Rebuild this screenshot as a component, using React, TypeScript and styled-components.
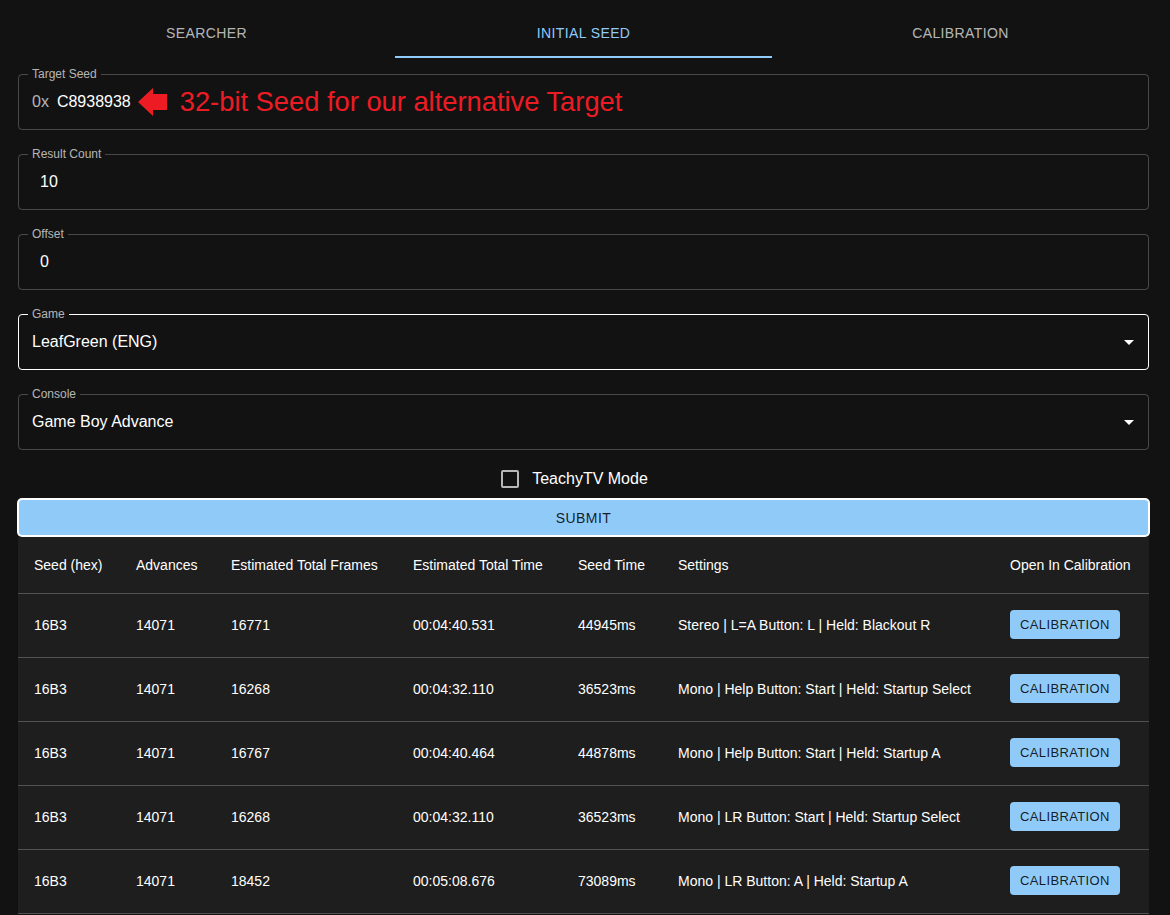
import React from 'react';
import styled, { createGlobalStyle } from 'styled-components';

const GlobalStyle = createGlobalStyle`
  html, body {
    margin: 0;
    padding: 0;
    background: #121212;
  }
  body {
    font-family: 'Liberation Sans', Arial, sans-serif;
    color: #fff;
  }
  * {
    box-sizing: border-box;
  }
`;

const Page = styled.div`
  width: 1131px;
  margin-left: 18px;
  padding-top: 10px;
  display: flex;
  flex-direction: column;
`;

const TabBar = styled.div`
  display: grid;
  grid-template-columns: repeat(3, 1fr);
`;

const Tab = styled.button<{ $active?: boolean }>`
  height: 48px;
  background: none;
  border: none;
  border-bottom: 2px solid ${p => (p.$active ? '#90caf9' : 'transparent')};
  color: ${p => (p.$active ? '#90caf9' : 'rgba(255, 255, 255, 0.7)')};
  font-family: 'Liberation Sans', Arial, sans-serif;
  font-size: 14px;
  letter-spacing: 0.02857em;
  text-transform: uppercase;
  padding: 0 0 1px;
`;

const Field = styled.div<{ $focused?: boolean }>`
  position: relative;
  margin: 16px 0 8px;
  height: 56px;
  border: 1px solid ${p => (p.$focused ? '#fff' : 'rgba(255, 255, 255, 0.23)')};
  border-radius: 4px;
  display: flex;
  align-items: center;
  padding: 0 13px;
`;

const FieldLabel = styled.span`
  position: absolute;
  top: -8px;
  left: 9px;
  padding: 0 4px;
  background: #121212;
  color: rgba(255, 255, 255, 0.7);
  font-size: 12px;
  line-height: 14px;
`;

const Value = styled.span<{ $inset?: boolean }>`
  font-size: 16px;
  color: #fff;
  padding-left: ${p => (p.$inset ? '8px' : '0')};
`;

const Prefix = styled.span`
  font-size: 16px;
  color: rgba(255, 255, 255, 0.7);
  margin-right: 8px;
`;

const Arrow = styled.svg`
  width: 30px;
  height: 28px;
  margin: 0 12px 0 7px;
`;

const Note = styled.span`
  color: #ed1c24;
  font-size: 27.3px;
  line-height: 30px;
`;

const DropIcon = styled.svg`
  position: absolute;
  right: 7px;
  top: 15px;
  width: 24px;
  height: 24px;
  fill: #fff;
`;

const CheckRow = styled.label`
  height: 41px;
  display: flex;
  align-items: center;
  justify-content: center;
  padding-right: 18px;
  font-size: 16px;
  color: #fff;
`;

const CheckBox = styled.span`
  width: 18px;
  height: 18px;
  border: 2px solid rgba(255, 255, 255, 0.7);
  border-radius: 2px;
  margin: 0 13px 0 0;
`;

const SubmitButton = styled.button`
  display: block;
  width: 100%;
  height: 37px;
  background: #90caf9;
  border: 1px solid #fff;
  box-shadow: 0 0 0 1px #fff;
  border-radius: 4px;
  color: rgba(0, 0, 0, 0.87);
  font-family: 'Liberation Sans', Arial, sans-serif;
  font-size: 14px;
  letter-spacing: 0.02857em;
  text-transform: uppercase;
`;

const Table = styled.table`
  width: 100%;
  table-layout: fixed;
  border-collapse: collapse;
  background: #1e1e1e;
  margin-top: 1px;
`;

const HeadCell = styled.th`
  height: 56px;
  padding: 0 16px;
  text-align: left;
  font-weight: normal;
  font-size: 14px;
  color: #fff;
  border-bottom: 1px solid #515151;
  white-space: nowrap;
`;

const Cell = styled.td`
  height: 64px;
  padding: 0 16px;
  font-size: 14px;
  color: #fff;
  border-bottom: 1px solid #515151;
  white-space: nowrap;
`;

const SmallButton = styled.button`
  background: #90caf9;
  border: none;
  border-radius: 4px;
  color: rgba(0, 0, 0, 0.87);
  font-family: 'Liberation Sans', Arial, sans-serif;
  font-size: 13px;
  letter-spacing: 0.02857em;
  text-transform: uppercase;
  padding: 0 10px;
  height: 29px;
  margin-bottom: 2px;
`;

const columns = [
  { label: 'Seed (hex)', width: 102 },
  { label: 'Advances', width: 95 },
  { label: 'Estimated Total Frames', width: 182 },
  { label: 'Estimated Total Time', width: 165 },
  { label: 'Seed Time', width: 100 },
  { label: 'Settings', width: 332 },
  { label: 'Open In Calibration', width: 155 },
];

const results = [
  { seed: '16B3', advances: '14071', frames: '16771', time: '00:04:40.531', seedTime: '44945ms', settings: 'Stereo | L=A Button: L | Held: Blackout R' },
  { seed: '16B3', advances: '14071', frames: '16268', time: '00:04:32.110', seedTime: '36523ms', settings: 'Mono | Help Button: Start | Held: Startup Select' },
  { seed: '16B3', advances: '14071', frames: '16767', time: '00:04:40.464', seedTime: '44878ms', settings: 'Mono | Help Button: Start | Held: Startup A' },
  { seed: '16B3', advances: '14071', frames: '16268', time: '00:04:32.110', seedTime: '36523ms', settings: 'Mono | LR Button: Start | Held: Startup Select' },
  { seed: '16B3', advances: '14071', frames: '18452', time: '00:05:08.676', seedTime: '73089ms', settings: 'Mono | LR Button: A | Held: Startup A' },
];

const ArrowDrop = () => (
  <DropIcon viewBox="0 0 24 24">
    <path d="M7 10l5 5 5-5z" />
  </DropIcon>
);

const App: React.FC = () => {
  return (
    <Page>
      <GlobalStyle />
      <TabBar>
        <Tab>Searcher</Tab>
        <Tab $active>Initial Seed</Tab>
        <Tab>Calibration</Tab>
      </TabBar>

      <Field>
        <FieldLabel>Target Seed</FieldLabel>
        <Prefix>0x</Prefix>
        <Value>C8938938</Value>
        <Arrow viewBox="0 0 30 28">
          <path d="M0 14 L15 0 L15 6 L29 6 L29 22 L15 22 L15 28 Z" fill="#ed1c24" />
        </Arrow>
        <Note>32-bit Seed for our alternative Target</Note>
      </Field>

      <Field>
        <FieldLabel>Result Count</FieldLabel>
        <Value $inset>10</Value>
      </Field>

      <Field>
        <FieldLabel>Offset</FieldLabel>
        <Value $inset>0</Value>
      </Field>

      <Field $focused>
        <FieldLabel>Game</FieldLabel>
        <Value>LeafGreen (ENG)</Value>
        <ArrowDrop />
      </Field>

      <Field>
        <FieldLabel>Console</FieldLabel>
        <Value>Game Boy Advance</Value>
        <ArrowDrop />
      </Field>

      <CheckRow>
        <CheckBox />
        TeachyTV Mode
      </CheckRow>

      <SubmitButton>Submit</SubmitButton>

      <Table>
        <colgroup>
          {columns.map(c => (
            <col key={c.label} style={{ width: c.width }} />
          ))}
        </colgroup>
        <thead>
          <tr>
            {columns.map(c => (
              <HeadCell key={c.label}>{c.label}</HeadCell>
            ))}
          </tr>
        </thead>
        <tbody>
          {results.map((r, i) => (
            <tr key={i}>
              <Cell>{r.seed}</Cell>
              <Cell>{r.advances}</Cell>
              <Cell>{r.frames}</Cell>
              <Cell>{r.time}</Cell>
              <Cell>{r.seedTime}</Cell>
              <Cell>{r.settings}</Cell>
              <Cell>
                <SmallButton>Calibration</SmallButton>
              </Cell>
            </tr>
          ))}
        </tbody>
      </Table>
    </Page>
  );
};

export default App;
